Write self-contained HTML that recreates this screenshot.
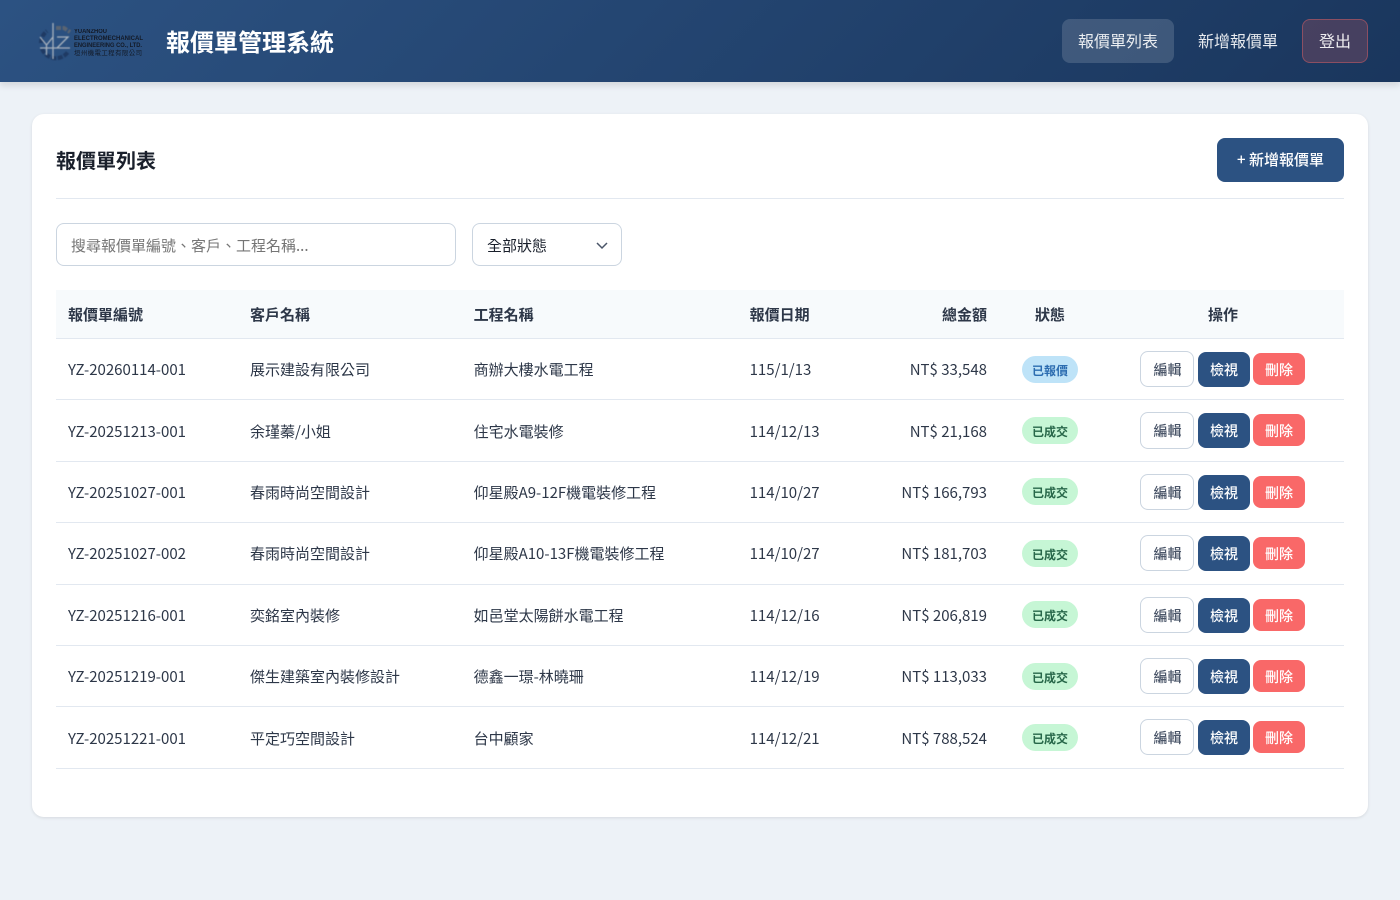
<!DOCTYPE html>
<html lang="zh-Hant"><head><meta charset="utf-8"><title>報價單管理系統</title>
<style>
*{box-sizing:border-box}
html,body{margin:0;padding:0;width:1400px;height:900px;overflow:hidden;background:#edf2f7}
body,.n{font-family:"Noto Sans CJK TC","Liberation Sans",sans-serif}
header{position:absolute;left:0;top:0;width:1400px;height:82px;background:linear-gradient(135deg,#2c5282,#1a365d);box-shadow:0 4px 6px rgba(0,0,0,.1)}
.logo{position:absolute;left:38px;top:21px}
h1{position:absolute;left:166px;top:23px;margin:0;font-size:24px;line-height:35px;font-weight:700;color:#fff;white-space:nowrap}
.nav{position:absolute;top:19px;height:44px;border-radius:8px;color:rgba(255,255,255,.9);font-size:16px;line-height:42px;text-align:center}
.card{position:absolute;left:32px;top:114px;width:1336px;height:703px;background:#fff;border-radius:12px;box-shadow:0 1px 3px rgba(0,0,0,.1)}
.hr{position:absolute;left:56px;top:198px;width:1288px;height:1px;background:#e2e8f0}
h2{position:absolute;left:56px;top:145px;margin:0;font-size:20px;line-height:29px;font-weight:700;color:#1a202c}
.add{position:absolute;left:1217px;top:138px;width:127px;height:44px;border-radius:8px;background:#2c5282;color:#fff;font-size:15px;font-weight:500;line-height:44px;text-align:center}
.search{position:absolute;left:56px;top:223px;width:400px;height:43px;border:1px solid #cbd5e0;border-radius:8px;font-size:15px;line-height:43px;padding-left:14px;color:#757575}
.sel{position:absolute;left:472px;top:223px;width:150px;height:43px;border:1px solid #cbd5e0;border-radius:8px;font-size:15px;line-height:43px;padding-left:14px;color:#1a202c}
.sel svg{position:absolute;left:123px;top:15px}
.thbg{position:absolute;left:56px;top:290px;width:1288px;height:49px;background:#f7fafc;border-bottom:1px solid #e2e8f0}
.t{position:absolute;font-size:15px;line-height:20px;white-space:nowrap;color:#2d3748}
.th{font-weight:700;top:305px}
.r{text-align:right}.c{text-align:center}
.line{position:absolute;left:56px;width:1288px;height:1px;background:#e2e8f0}
.badge{position:absolute;left:1022px;width:56px;height:27px;border-radius:14px;font-size:12px;font-weight:700;line-height:29px;text-align:center}
.b1{background:#bee3f8;color:#2b6cb0}.b2{background:#c6f6d5;color:#276749}
.btn{position:absolute;font-size:14px;font-weight:500;text-align:center}
.e{left:1140px;width:54px;height:36px;border:1px solid #cbd5e0;border-radius:8px;background:#fff;color:#4a5568;line-height:36px;padding-left:1px}
.v{left:1198px;width:52px;height:35px;border-radius:8px;background:#2c5282;color:#fff;line-height:37px}
.d{left:1253px;width:52px;height:32px;border-radius:8px;background:#f96868;color:#fff;line-height:34px}
.c3{left:473.6px}.c4{left:749.6px}
</style></head><body>
<header>
<svg class="logo" width="108" height="40" viewBox="0 0 108 40">
<g style="filter:blur(.4px)">
<path d="M4 28a15 15 0 0 0 26 3" fill="none" stroke="#1f3a63" stroke-width="4" stroke-dasharray="5 1.5"/>
<path d="M3 22a15 15 0 0 1 6-12" fill="none" stroke="#1f3a63" stroke-width="4" stroke-dasharray="5 1.5"/>
<path d="M18 7l8 0 6 4" fill="none" stroke="#5a6472" stroke-width="4" stroke-dasharray="5 1.5"/>
<path d="M2 16l6.500 8v10M15 16l-6.500 8M19 16h11L19 27h11M15 2v36M2 27h30" fill="none" stroke="#a9b2bd" stroke-width="1.300"/>
</g>
<g font-family="Liberation Sans" font-size="6" font-weight="700" fill="#131a27" style="filter:blur(.2px)">
<text x="36" y="12" textLength="33" lengthAdjust="spacingAndGlyphs">YUANZHOU</text>
<text x="36" y="18.800" textLength="69" lengthAdjust="spacingAndGlyphs">ELECTROMECHANICAL</text>
<text x="36" y="25.800" textLength="68" lengthAdjust="spacingAndGlyphs">ENGINEERING CO., LTD.</text>
<text x="36" y="33.800" textLength="68" lengthAdjust="spacing" font-family="Noto Sans CJK TC" font-size="6.400" font-weight="400">垣州機電工程有限公司</text>
</g>
</svg>
<h1>報價單管理系統</h1>
<div class="nav" style="left:1062px;width:112px;background:rgba(255,255,255,.15)">報價單列表</div>
<div class="nav" style="left:1182px;width:112px">新增報價單</div>
<div class="nav" style="left:1302px;width:66px;background:rgba(245,101,101,.2);border:1px solid rgba(245,101,101,.4);line-height:41px">登出</div>
</header>
<div class="card"></div>
<h2>報價單列表</h2>
<div class="add">+ 新增報價單</div>
<div class="hr"></div>
<div class="search">搜尋報價單編號、客戶、工程名稱...</div>
<div class="sel">全部狀態<svg width="12" height="12" viewBox="0 0 12 12"><path d="M1 4l5 5 5-5" fill="none" stroke="#4a5568" stroke-width="1.500"/></svg></div>
<div class="thbg"></div>
<div class="t th" style="left:68px">報價單編號</div>
<div class="t th" style="left:250px">客戶名稱</div>
<div class="t th c3">工程名稱</div>
<div class="t th c4">報價日期</div>
<div class="t th r" style="left:887px;width:100px">總金額</div>
<div class="t th c" style="left:1000px;width:100px">狀態</div>
<div class="t th c" style="left:1173px;width:100px">操作</div>

<div class="t" style="left:68px;top:360px">YZ-20260114-001</div><div class="t" style="left:250px;top:360px">展示建設有限公司</div><div class="t c3" style="top:360px">商辦大樓水電工程</div><div class="t c4" style="top:360px">115/1/13</div><div class="t r" style="left:847px;width:140px;top:360px">NT$ 33,548</div>
<div class="badge b1" style="top:356px">已報價</div><div class="btn e" style="top:351px">編輯</div><div class="btn v" style="top:352px">檢視</div><div class="btn d" style="top:353px">刪除</div><div class="line" style="top:399px"></div>

<div class="t" style="left:68px;top:422px">YZ-20251213-001</div><div class="t" style="left:250px;top:422px">余瑾蓁/小姐</div><div class="t c3" style="top:422px">住宅水電裝修</div><div class="t c4" style="top:422px">114/12/13</div><div class="t r" style="left:847px;width:140px;top:422px">NT$ 21,168</div>
<div class="badge b2" style="top:417px">已成交</div><div class="btn e" style="top:412px;height:37px">編輯</div><div class="btn v" style="top:413px">檢視</div><div class="btn d" style="top:414px">刪除</div><div class="line" style="top:461px"></div>

<div class="t" style="left:68px;top:483px">YZ-20251027-001</div><div class="t" style="left:250px;top:483px">春雨時尚空間設計</div><div class="t c3" style="top:483px">仰星殿A9-12F機電裝修工程</div><div class="t c4" style="top:483px">114/10/27</div><div class="t r" style="left:847px;width:140px;top:483px">NT$ 166,793</div>
<div class="badge b2" style="top:478px">已成交</div><div class="btn e" style="top:474px">編輯</div><div class="btn v" style="top:475px">檢視</div><div class="btn d" style="top:476px">刪除</div><div class="line" style="top:522px"></div>

<div class="t" style="left:68px;top:544px">YZ-20251027-002</div><div class="t" style="left:250px;top:544px">春雨時尚空間設計</div><div class="t c3" style="top:544px">仰星殿A10-13F機電裝修工程</div><div class="t c4" style="top:544px">114/10/27</div><div class="t r" style="left:847px;width:140px;top:544px">NT$ 181,703</div>
<div class="badge b2" style="top:540px">已成交</div><div class="btn e" style="top:535px">編輯</div><div class="btn v" style="top:536px">檢視</div><div class="btn d" style="top:537px">刪除</div><div class="line" style="top:584px"></div>

<div class="t" style="left:68px;top:606px">YZ-20251216-001</div><div class="t" style="left:250px;top:606px">奕銘室內裝修</div><div class="t c3" style="top:606px">如邑堂太陽餅水電工程</div><div class="t c4" style="top:606px">114/12/16</div><div class="t r" style="left:847px;width:140px;top:606px">NT$ 206,819</div>
<div class="badge b2" style="top:601px">已成交</div><div class="btn e" style="top:597px">編輯</div><div class="btn v" style="top:598px">檢視</div><div class="btn d" style="top:599px">刪除</div><div class="line" style="top:645px"></div>

<div class="t" style="left:68px;top:667px">YZ-20251219-001</div><div class="t" style="left:250px;top:667px">傑生建築室內裝修設計</div><div class="t c3" style="top:667px">德鑫一璟-林曉珊</div><div class="t c4" style="top:667px">114/12/19</div><div class="t r" style="left:847px;width:140px;top:667px">NT$ 113,033</div>
<div class="badge b2" style="top:663px">已成交</div><div class="btn e" style="top:658px">編輯</div><div class="btn v" style="top:659px">檢視</div><div class="btn d" style="top:660px">刪除</div><div class="line" style="top:706px"></div>

<div class="t" style="left:68px;top:729px">YZ-20251221-001</div><div class="t" style="left:250px;top:729px">平定巧空間設計</div><div class="t c3" style="top:729px">台中顧家</div><div class="t c4" style="top:729px">114/12/21</div><div class="t r" style="left:847px;width:140px;top:729px">NT$ 788,524</div>
<div class="badge b2" style="top:724px">已成交</div><div class="btn e" style="top:719px">編輯</div><div class="btn v" style="top:720px">檢視</div><div class="btn d" style="top:721px">刪除</div><div class="line" style="top:768px"></div>
</body></html>
